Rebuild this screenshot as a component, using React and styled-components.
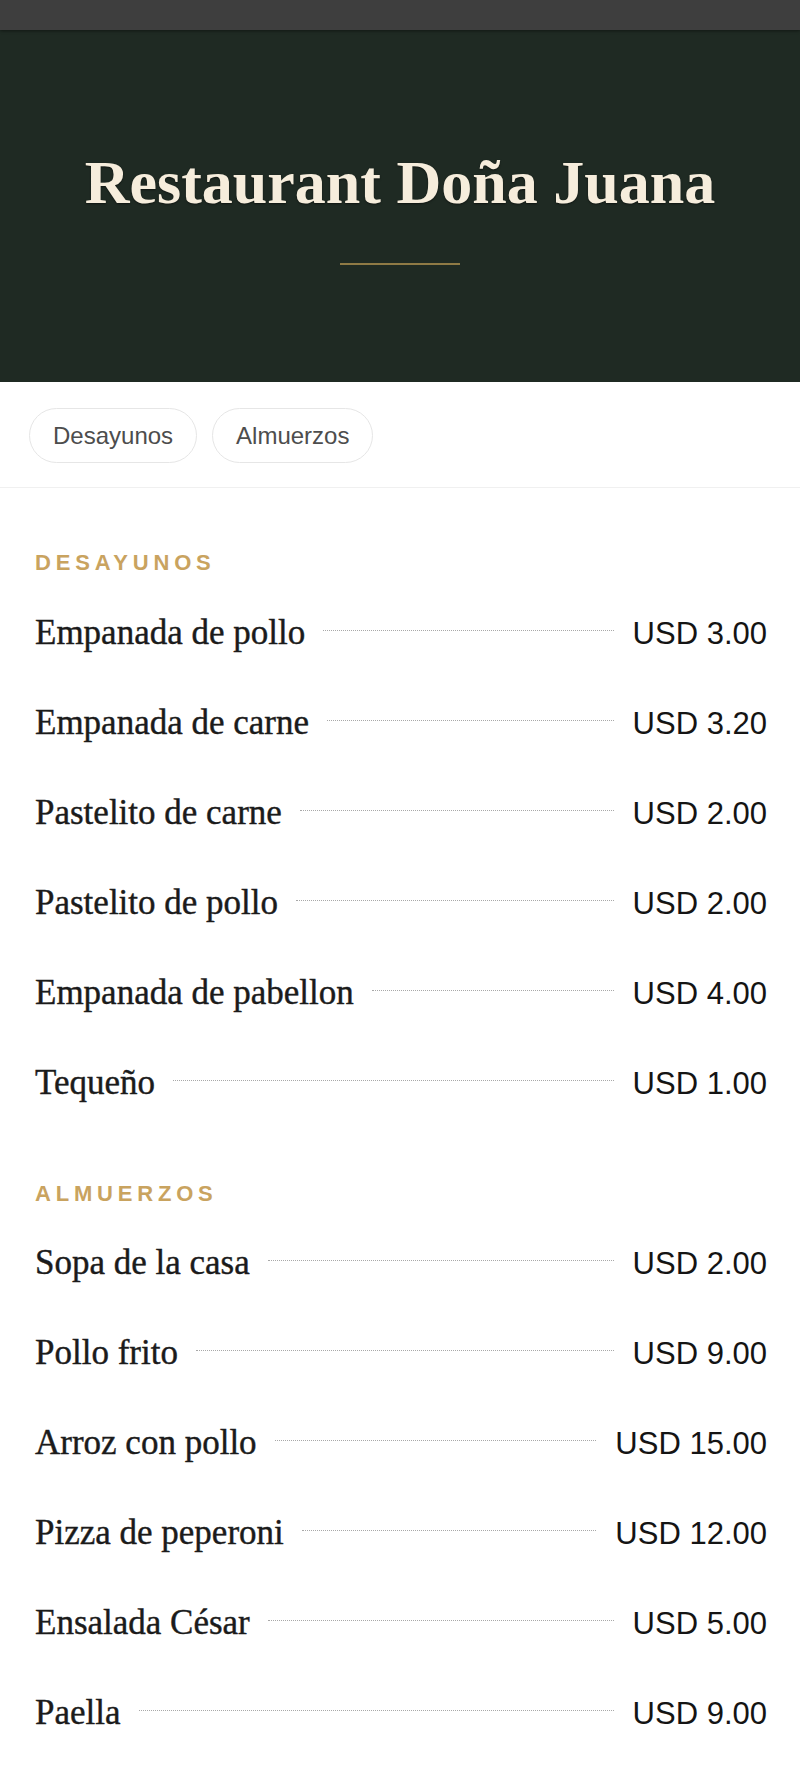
import React from 'react'
import styled, { createGlobalStyle } from 'styled-components'

const menu = [
  {
    id: 'desayunos',
    title: 'Desayunos',
    items: [
      { name: 'Empanada de pollo', price: '3.00' },
      { name: 'Empanada de carne', price: '3.20' },
      { name: 'Pastelito de carne', price: '2.00' },
      { name: 'Pastelito de pollo', price: '2.00' },
      { name: 'Empanada de pabellon', price: '4.00' },
      { name: 'Tequeño', price: '1.00' },
    ],
  },
  {
    id: 'almuerzos',
    title: 'Almuerzos',
    items: [
      { name: 'Sopa de la casa', price: '2.00' },
      { name: 'Pollo frito', price: '9.00' },
      { name: 'Arroz con pollo', price: '15.00' },
      { name: 'Pizza de peperoni', price: '12.00' },
      { name: 'Ensalada César', price: '5.00' },
      { name: 'Paella', price: '9.00' },
    ],
  },
]

const App = () => {
  return (
    <>
      <GlobalStyle />
      <TopBar />
      <Hero>
        <Title>Restaurant Doña Juana</Title>
        <Rule />
      </Hero>
      <Tabs>
        {menu.map((section) => (
          <Tab key={section.id} href={`#${section.id}`}>
            {section.title}
          </Tab>
        ))}
      </Tabs>
      <Menu>
        {menu.map((section) => (
          <Section key={section.id} id={section.id}>
            <SectionTitle>{section.title}</SectionTitle>
            {section.items.map((item) => (
              <Row key={item.name}>
                <ItemName>{item.name}</ItemName>
                <Leader />
                <Price>USD {item.price}</Price>
              </Row>
            ))}
          </Section>
        ))}
      </Menu>
    </>
  )
}

const GlobalStyle = createGlobalStyle`
  * {
    box-sizing: border-box;
  }
  body {
    margin: 0;
    background: #ffffff;
    font-family: "Liberation Sans", Arial, sans-serif;
  }
`

const TopBar = styled.div`
  height: 30px;
  background: #3e3e3e;
  box-shadow: 0 1px 3px rgba(0, 0, 0, 0.45);
  position: relative;
  z-index: 1;
`

const Hero = styled.header`
  background: #1f2a23;
  padding: 116px 20px 117px;
  display: flex;
  flex-direction: column;
  align-items: center;
`

const Title = styled.h1`
  margin: 0;
  font-family: "Liberation Serif", "Times New Roman", serif;
  font-weight: 700;
  font-size: 62px;
  line-height: 1.18;
  color: #f6eddc;
  text-align: center;
  text-shadow: 0 1px 2px rgba(0, 0, 0, 0.5);
`

const Rule = styled.div`
  width: 120px;
  height: 2px;
  margin-top: 44px;
  background: #8f7a45;
`

const Tabs = styled.nav`
  display: flex;
  gap: 15px;
  padding: 26px 29px 24px;
  border-bottom: 1px solid #f0f0f0;
`

const Tab = styled.a`
  display: inline-flex;
  align-items: center;
  height: 55px;
  padding: 0 23px;
  border: 1.5px solid #e6e6e6;
  border-radius: 999px;
  font-size: 24px;
  color: #4d4d4d;
  text-decoration: none;
  background: #fff;
`

const Menu = styled.main`
  padding: 62px 33px 40px 35px;
`

const Section = styled.section`
  & + & {
    margin-top: 53px;
  }
`

const SectionTitle = styled.h2`
  margin: 0 0 11px;
  font-size: 22px;
  line-height: 1.2;
  font-weight: 700;
  letter-spacing: 4.8px;
  text-transform: uppercase;
  color: #c9a35f;
`

const Row = styled.div`
  display: flex;
  align-items: baseline;
  padding: 24px 0;
`

const ItemName = styled.span`
  font-family: "Liberation Serif", "Times New Roman", serif;
  font-size: 35px;
  line-height: 1.2;
  color: #1b1b1b;
  -webkit-text-stroke: 0.4px #1b1b1b;
  white-space: nowrap;
`

const Leader = styled.span`
  flex: 1;
  height: 0;
  margin: 0 19px 0 18px;
  border-bottom: 1px dotted #a8a8a8;
  transform: translateY(-13px);
`

const Price = styled.span`
  font-size: 31px;
  line-height: 1.2;
  color: #141414;
  white-space: nowrap;
`

export default App
